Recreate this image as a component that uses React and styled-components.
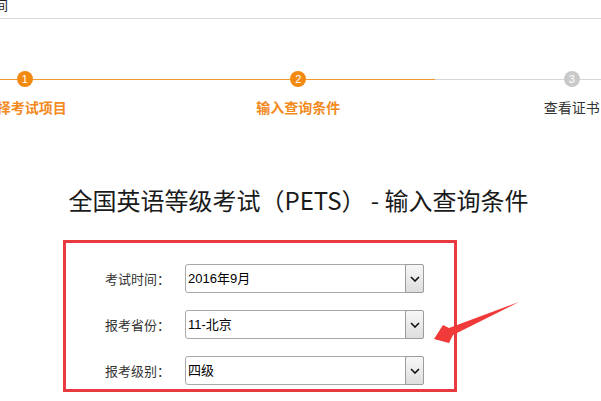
import React from "react";
import styled, { createGlobalStyle } from "styled-components";

const Global = createGlobalStyle`
  html, body { margin: 0; padding: 0; background: #fff; overflow: hidden; }
  body { font-family: "Noto Sans CJK SC", "Liberation Sans", sans-serif; }
`;

const Page = styled.div`
  position: relative;
  width: 601px;
  height: 401px;
  overflow: hidden;
  background: #fff;
`;

const Header = styled.div`
  height: 18px;
  border-bottom: 1px solid #dadada;
  overflow: hidden;
`;

const HeaderText = styled.div`
  margin-left: -18px;
  margin-top: -4px;
  font-size: 13px;
  line-height: 18px;
  color: #222;
`;

const Steps = styled.div`
  display: grid;
  grid-template-columns: repeat(3, 273.5px);
  margin-left: -112px;
  margin-top: 52px;
`;

const Step = styled.div`
  display: flex;
  flex-direction: column;
  align-items: center;
`;

const Track = styled.div`
  display: flex;
  align-items: center;
  width: 100%;
  height: 16px;
`;

const Line = styled.div`
  flex: 1;
  height: 1px;
  background: ${(p) => (p.$on ? "#f29a2e" : "#d6d6d6")};
`;

const Dot = styled.div`
  width: 16px;
  height: 16px;
  border-radius: 50%;
  background: ${(p) => (p.$on ? "#f28a12" : "#c9c9c9")};
  color: #fff;
  font-family: "Liberation Sans", sans-serif;
  font-size: 11px;
  line-height: 16px;
  text-align: center;
`;

const StepLabel = styled.div`
  margin-top: 10px;
  font-size: 14px;
  line-height: 20px;
  font-weight: ${(p) => (p.$on ? 700 : 400)};
  color: ${(p) => (p.$on ? "#f28a1e" : "#333")};
  white-space: nowrap;
`;

const Title = styled.h1`
  margin: 67px 0 0;
  padding-right: 4px;
  font-size: 24px;
  font-weight: 400;
  line-height: 32px;
  color: #1a1a1a;
  text-align: center;
  white-space: nowrap;
`;

const FormBox = styled.div`
  box-sizing: border-box;
  margin: 24px 0 0 63px;
  width: 394px;
  border: 3px solid #e83a3f;
  padding: 21px 0 4px 39px;
  display: flex;
  flex-direction: column;
  gap: 17px;
`;

const Row = styled.div`
  display: flex;
  align-items: center;
  height: 29px;
`;

const Label = styled.div`
  width: 80px;
  font-size: 13px;
  color: #333;
  white-space: nowrap;
`;

const Select = styled.div`
  box-sizing: border-box;
  width: 239px;
  height: 29px;
  border: 1px solid #a9a9a9;
  border-radius: 3px;
  display: flex;
  align-items: stretch;
  background: #fff;
`;

const Value = styled.div`
  flex: 1;
  padding-left: 2px;
  font-family: "Liberation Sans", "Noto Sans CJK SC", sans-serif;
  font-size: 13px;
  line-height: 27px;
  color: #000;
`;

const DropButton = styled.div`
  box-sizing: border-box;
  width: 19px;
  margin: -1px -1px -1px 0;
  border: 1px solid #9c9c9c;
  border-radius: 2px;
  background: linear-gradient(#f7f7f7, #dedede);
  display: flex;
  align-items: center;
  justify-content: center;
`;

const Arrow = styled.svg`
  position: absolute;
  left: 430px;
  top: 298px;
`;

const Chevron = () => (
  <svg width="10" height="6" viewBox="0 0 10 6">
    <path d="M1 1 L5 5 L9 1" fill="none" stroke="#111" strokeWidth="1.6" />
  </svg>
);

const steps = [
  { n: 1, label: "选择考试项目", on: true },
  { n: 2, label: "输入查询条件", on: true },
  { n: 3, label: "查看证书", on: false },
];

const fields = [
  { label: "考试时间：", value: "2016年9月" },
  { label: "报考省份：", value: "11-北京" },
  { label: "报考级别：", value: "四级" },
];

export default function App() {
  return (
    <>
      <Global />
      <Page>
        <Header>
          <HeaderText>时间</HeaderText>
        </Header>
        <Steps>
          {steps.map((s) => (
            <Step key={s.n}>
              <Track>
                <Line $on={s.on} />
                <Dot $on={s.on}>{s.n}</Dot>
                <Line $on={s.on} />
              </Track>
              <StepLabel $on={s.on}>{s.label}</StepLabel>
            </Step>
          ))}
        </Steps>
        <Title>全国英语等级考试（PETS） - 输入查询条件</Title>
        <FormBox>
          {fields.map((f) => (
            <Row key={f.label}>
              <Label>{f.label}</Label>
              <Select>
                <Value>{f.value}</Value>
                <DropButton>
                  <Chevron />
                </DropButton>
              </Select>
            </Row>
          ))}
        </FormBox>
        <Arrow width="92" height="48" viewBox="0 0 92 48">
          <polygon
            points="4,41 13,27 19,30 89,4 23,37 19,45"
            fill="#f03a3a"
          />
        </Arrow>
      </Page>
    </>
  );
}
